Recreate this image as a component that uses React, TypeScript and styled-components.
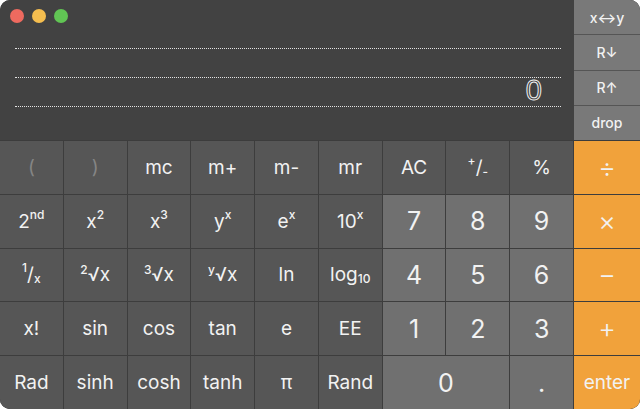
import React from "react";
import styled, { createGlobalStyle } from "styled-components";

const GlobalStyle = createGlobalStyle`
  html, body {
    margin: 0;
    padding: 0;
    background: #ffffff;
  }
  * {
    box-sizing: border-box;
  }
`;

const Window = styled.div`
  width: 640px;
  height: 409px;
  border-radius: 10px;
  overflow: hidden;
  background: #3c3c3c;
  display: flex;
  flex-direction: column;
  font-family: Inter, "Liberation Sans", sans-serif;
  color: #f0f0f0;
`;

const Top = styled.div`
  height: 140px;
  display: flex;
`;

const Display = styled.div`
  flex: 1;
  background: #424242;
  position: relative;
  padding: 20px 13px 0 15px;
  display: flex;
  flex-direction: column;
`;

const Lights = styled.div`
  position: absolute;
  top: 9px;
  left: 10px;
  display: flex;
  gap: 8px;
`;

const Light = styled.span<{ $color: string }>`
  width: 14px;
  height: 14px;
  border-radius: 50%;
  background: ${(p) => p.$color};
`;

const Line = styled.div`
  height: 29px;
  border-bottom: 1px dotted rgba(255, 255, 255, 0.85);
  display: flex;
  justify-content: flex-end;
  align-items: flex-end;
  padding-right: 19px;
`;

const Value = styled.span`
  font-family: "Liberation Sans", sans-serif;
  font-size: 29px;
  line-height: 1;
  margin-bottom: 1px;
  color: #424242;
  -webkit-text-stroke: 1px #f0f0f0;
`;

const Stack = styled.div`
  width: 66px;
  display: flex;
  flex-direction: column;
  gap: 1px;
  background: #555555;
`;

const StackKey = styled.div`
  flex: 1;
  background: #797979;
  display: flex;
  align-items: center;
  justify-content: center;
  font-size: 14px;
  font-weight: 500;
  color: #f2f2f2;
`;

const Keypad = styled.div`
  flex: 1;
  margin-top: 1px;
  display: grid;
  grid-template-columns: repeat(9, 1fr) 66px;
  grid-template-rows: repeat(5, 1fr);
  gap: 1px;
  background: #3d3d3d;
`;

type Kind = "fn" | "digit" | "op" | "off";

const bg: Record<Kind, string> = {
  fn: "#565656",
  digit: "#707070",
  op: "#f1a23b",
  off: "#565656",
};

const Key = styled.div<{ $kind: Kind; $span?: number; $big?: boolean }>`
  grid-column: span ${(p) => p.$span || 1};
  background: ${(p) => bg[p.$kind]};
  color: ${(p) => (p.$kind === "off" ? "#858585" : "#f2f2f2")};
  font-size: ${(p) => (p.$big ? "25px" : "19px")};
  display: flex;
  align-items: center;
  justify-content: center;
  white-space: nowrap;
`;

const Sup = styled.span`
  font-size: 12px;
  font-weight: 500;
  position: relative;
  top: -7px;
`;

const Sub = styled.span`
  font-size: 12px;
  font-weight: 500;
  position: relative;
  top: 4px;
`;

const Op = styled.span`
  font-size: 27px;
  font-weight: 300;
`;

const Root = ({ n }: { n: string }) => (
  <span>
    <Sup>{n}</Sup>√x
  </span>
);

export default function App() {
  return (
    <>
      <GlobalStyle />
      <Window>
        <Top>
          <Display>
            <Lights>
              <Light $color="#ee6a5f" />
              <Light $color="#f5be4f" />
              <Light $color="#61c554" />
            </Lights>
            <Line />
            <Line />
            <Line>
              <Value>0</Value>
            </Line>
          </Display>
          <Stack>
            <StackKey>x↔y</StackKey>
            <StackKey>R↓</StackKey>
            <StackKey>R↑</StackKey>
            <StackKey>drop</StackKey>
          </Stack>
        </Top>
        <Keypad>
          <Key $kind="off">(</Key>
          <Key $kind="off">)</Key>
          <Key $kind="fn">mc</Key>
          <Key $kind="fn">m+</Key>
          <Key $kind="fn">m-</Key>
          <Key $kind="fn">mr</Key>
          <Key $kind="fn">AC</Key>
          <Key $kind="fn">
            <Sup>+</Sup>/<Sub>-</Sub>
          </Key>
          <Key $kind="fn">%</Key>
          <Key $kind="op">
            <Op>÷</Op>
          </Key>

          <Key $kind="fn">
            2<Sup>nd</Sup>
          </Key>
          <Key $kind="fn">
            x<Sup>2</Sup>
          </Key>
          <Key $kind="fn">
            x<Sup>3</Sup>
          </Key>
          <Key $kind="fn">
            y<Sup>x</Sup>
          </Key>
          <Key $kind="fn">
            e<Sup>x</Sup>
          </Key>
          <Key $kind="fn">
            10<Sup>x</Sup>
          </Key>
          <Key $kind="digit" $big>7</Key>
          <Key $kind="digit" $big>8</Key>
          <Key $kind="digit" $big>9</Key>
          <Key $kind="op">
            <Op>×</Op>
          </Key>

          <Key $kind="fn">
            <Sup>1</Sup>/<Sub>x</Sub>
          </Key>
          <Key $kind="fn">
            <Root n="2" />
          </Key>
          <Key $kind="fn">
            <Root n="3" />
          </Key>
          <Key $kind="fn">
            <Root n="y" />
          </Key>
          <Key $kind="fn">ln</Key>
          <Key $kind="fn">
            log<Sub>10</Sub>
          </Key>
          <Key $kind="digit" $big>4</Key>
          <Key $kind="digit" $big>5</Key>
          <Key $kind="digit" $big>6</Key>
          <Key $kind="op">
            <Op>−</Op>
          </Key>

          <Key $kind="fn">x!</Key>
          <Key $kind="fn">sin</Key>
          <Key $kind="fn">cos</Key>
          <Key $kind="fn">tan</Key>
          <Key $kind="fn">e</Key>
          <Key $kind="fn">EE</Key>
          <Key $kind="digit" $big>1</Key>
          <Key $kind="digit" $big>2</Key>
          <Key $kind="digit" $big>3</Key>
          <Key $kind="op">
            <Op>+</Op>
          </Key>

          <Key $kind="fn">Rad</Key>
          <Key $kind="fn">sinh</Key>
          <Key $kind="fn">cosh</Key>
          <Key $kind="fn">tanh</Key>
          <Key $kind="fn">π</Key>
          <Key $kind="fn">Rand</Key>
          <Key $kind="digit" $big $span={2}>
            0
          </Key>
          <Key $kind="digit" $big>.</Key>
          <Key $kind="op">enter</Key>
        </Keypad>
      </Window>
    </>
  );
}
